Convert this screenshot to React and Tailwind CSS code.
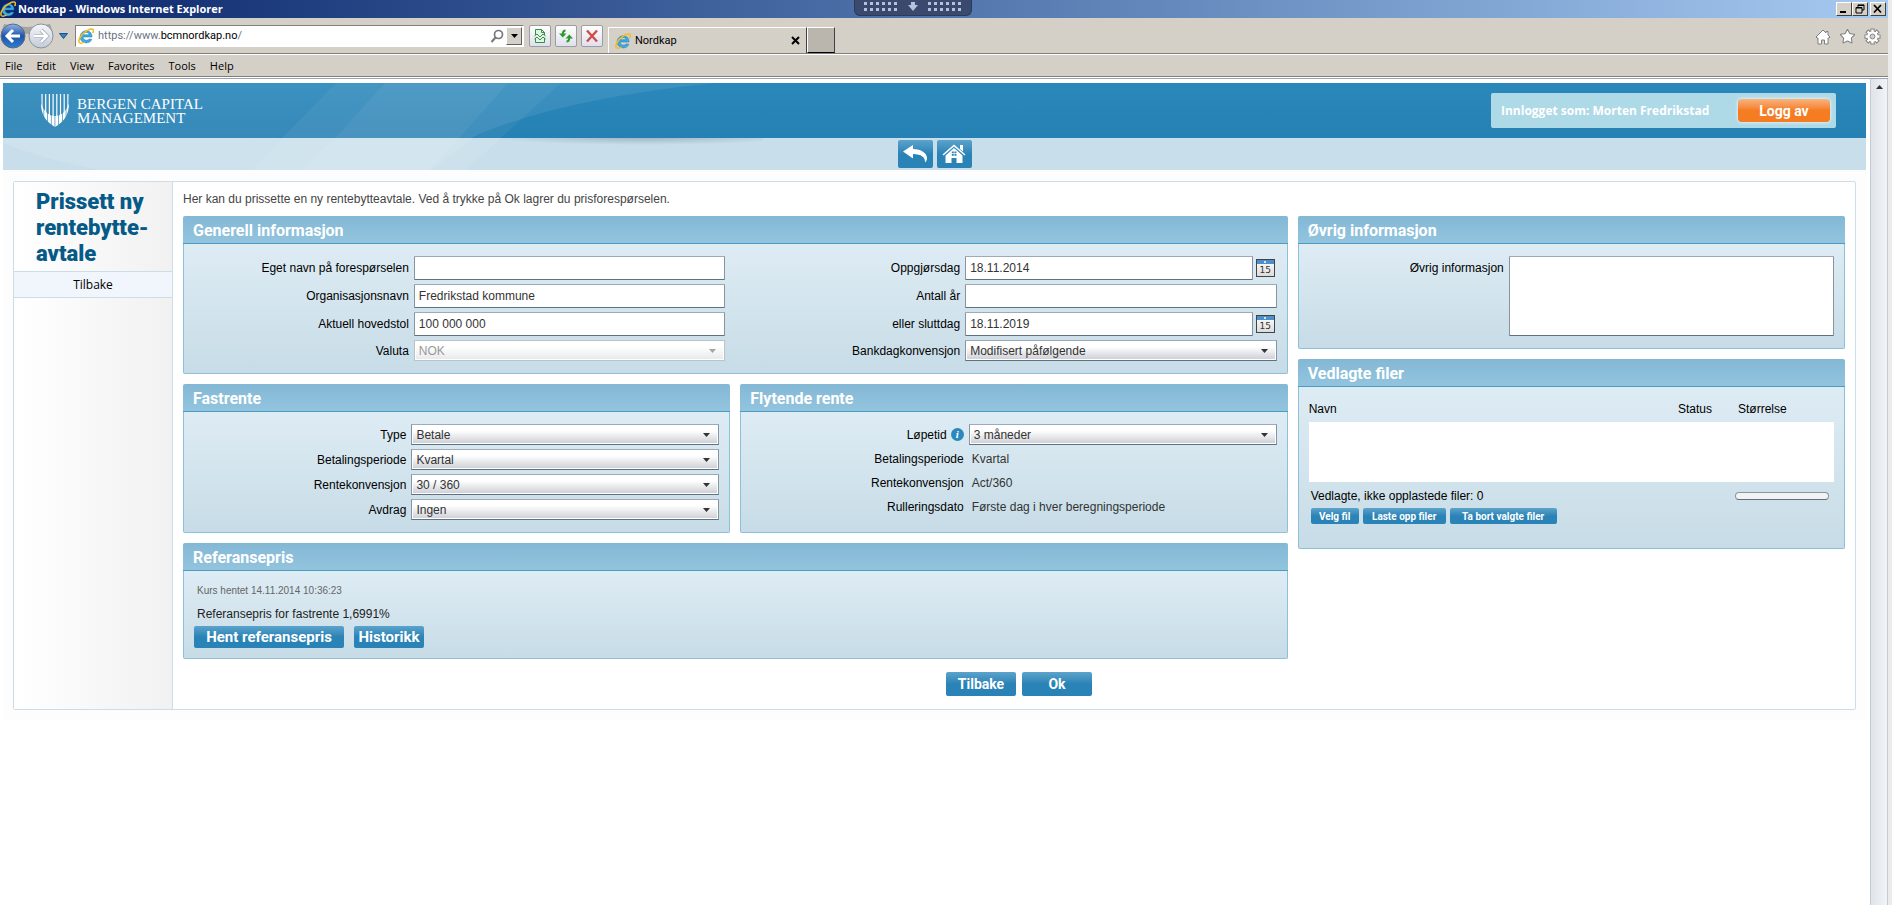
import { useState } from 'react'
import { Star } from 'lucide-react'

const panelBody = 'rounded-b-xs border border-t-0 border-[#8bc1db] bg-linear-to-b from-[#deecf4] to-[#c7dce7]'
const blueButton = 'rounded-xs bg-linear-to-b from-[#5ba3cb] via-[#2a83b6] via-50% to-[#2a83b6] font-[Roboto,sans-serif] font-bold text-white'
const fieldBorder = 'border border-[#8794a1] border-t-[#9dabb8] border-b-[#5f7080]'

function IeLogo({ className }) {
  return (
    <svg viewBox="0 0 16 16" className={className} aria-hidden="true">
      <path d="M14 9H5c.1 2 1.500 3.200 3.500 3.200 1.300 0 2.200-.5 2.700-1.200l2.600.3c-.8 2.200-2.900 3.600-5.400 3.600-3.700 0-6.300-2.600-6.300-6s2.700-6.100 6.200-6.100c3.600 0 6 2.600 5.700 6.200Zm-2.900-2.200C10.900 5.400 9.800 4.500 8.200 4.500S5.400 5.400 5.100 6.800Z" fill="#3fa9e0" stroke="#1c78b4" strokeWidth=".5" />
      <path d="M1.600 14.800C-.6 12.800 2.600 7 8.200 3.200 11.600.9 14.800.3 15.300 1.800c.3.8 0 2-.6 3.200" fill="none" stroke="#f2bb22" strokeWidth="1.600" />
      <path d="M1.600 14.800c1 .7 3 .3 5-.8" fill="none" stroke="#f2bb22" strokeWidth="1.400" />
    </svg>
  )
}

function WindowButton({ label, children }) {
  return (
    <button type="button" aria-label={label} className="flex h-3.5 w-4 items-center justify-center border border-t-white border-r-[#404040] border-b-[#404040] border-l-white bg-[#d4d0c8]">
      <svg viewBox="0 0 12 10" className="h-2.5 w-3" fill="none" stroke="#000">{children}</svg>
    </button>
  )
}

function Grip() {
  return (
    <svg viewBox="0 0 34 9" className="h-[9px] w-[34px]" fill="#b4c3dc" aria-hidden="true">
      {[0, 6, 12, 18, 24, 30].map((x) => (
        <g key={x}>
          <rect x={x} y="0" width="3" height="3" />
          <rect x={x} y="6" width="3" height="3" />
        </g>
      ))}
    </svg>
  )
}

function TitleBar() {
  return (
    <div className="relative flex h-[18px] items-center justify-between bg-linear-to-r from-[#0a246a] to-[#a6caf0] pr-0.5">
      <div className="flex items-center gap-0.5">
        <IeLogo className="h-4 w-4" />
        <h1 className="font-['Open_Sans',sans-serif] text-[11px] font-bold text-white">Nordkap - Windows Internet Explorer</h1>
      </div>
      <div className="absolute top-0 left-[854px] flex h-4 w-[118px] items-start justify-center gap-2.5 rounded-b-md border border-t-0 border-[#2c3a58] bg-[#3a4a6e] pt-0.5">
        <Grip />
        <svg viewBox="0 0 10 9" className="h-[9px] w-2.5" fill="#b4c3dc" aria-hidden="true">
          <path d="M3 0h4v3h3L5 9 0 3h3Z" />
        </svg>
        <Grip />
      </div>
      <div className="flex">
        <WindowButton label="Minimize"><path d="M2 8h6" strokeWidth="2" /></WindowButton>
        <WindowButton label="Restore"><path d="M4 3V.9h6V6H8M2 4h6M2 3.500h6V9H2ZM4 1.500h6" /></WindowButton>
        <div className="w-0.5" />
        <WindowButton label="Close"><path d="m2 1 7 7.500M9 1 2 8.500" strokeWidth="1.700" /></WindowButton>
      </div>
    </div>
  )
}

function ToolButton({ label, children }) {
  return (
    <button type="button" aria-label={label} className="flex h-[22px] w-[22px] items-center justify-center rounded-xs border border-[#9a9ca8] bg-linear-to-b from-white to-[#dfe0ec]">
      <svg viewBox="0 0 16 16" className="h-4 w-4" fill="none">{children}</svg>
    </button>
  )
}

function AddressRow() {
  return (
    <div className="flex h-9 items-center border-b border-[#808080] bg-[#d4d0c8]">
      <svg viewBox="0 0 56 30" className="h-[30px] w-14" aria-hidden="true">
        <defs>
          <linearGradient id="back" x1="0" y1="0" x2="0" y2="1">
            <stop offset="0" stopColor="#8fb4e4" />
            <stop offset=".5" stopColor="#1f55a8" />
            <stop offset="1" stopColor="#2f7fd0" />
          </linearGradient>
          <linearGradient id="fwd" x1="0" y1="0" x2="0" y2="1">
            <stop offset="0" stopColor="#f4f6fa" />
            <stop offset="1" stopColor="#c3cbd8" />
          </linearGradient>
        </defs>
        <path d="M4 3Q27 9 50 3l3 8-24 2L1 12Z" fill="#a7a49d" />
        <circle cx="13" cy="15" r="12" fill="url(#back)" stroke="#5a6b8c" />
        <circle cx="41" cy="15" r="12" fill="url(#fwd)" stroke="#8d929b" />
        <path d="M20 15H7.500M13 9l-6 6 6 6" fill="none" stroke="#fff" strokeWidth="3" />
        <path d="M34 15h12.500M41 9l6 6-6 6" fill="none" stroke="#a9b0bd" strokeWidth="4" />
        <path d="M34 15h12.500M41 9l6 6-6 6" fill="none" stroke="#fff" strokeWidth="2.400" />
      </svg>
      <svg viewBox="0 0 9 6" className="ml-[3px] h-1.5 w-[9px]" aria-hidden="true">
        <path d="M.5.5h8L4.500 5.500Z" fill="#2e86d0" stroke="#1c4f86" />
      </svg>
      <div className="ml-[7px] flex h-[22px] w-[449px] items-center border border-[#808080] border-r-white border-b-white bg-white pl-0.5">
        <IeLogo className="h-4 w-4" />
        <div className="ml-1 flex-1 pt-0.5 font-[Roboto,sans-serif] text-[11px] text-gray-500">
          https://www.<span className="text-black">bcmnordkap.no</span>/
        </div>
        <svg viewBox="0 0 14 14" className="mr-0.5 h-3.5 w-3.5" fill="none" stroke="#777" aria-hidden="true">
          <circle cx="8.500" cy="5.500" r="4" strokeWidth="1.700" />
          <path d="m5.500 8.500-4 4.500" strokeWidth="2" />
        </svg>
        <button type="button" aria-label="Show addresses" className="mr-px flex h-[18px] w-4 items-center justify-center border border-t-white border-r-[#606060] border-b-[#606060] border-l-white bg-[#d4d0c8]">
          <svg viewBox="0 0 7 4" className="h-1 w-[7px]"><path d="M0 0h7L3.500 4Z" /></svg>
        </button>
      </div>
      <div className="ml-[5px] flex gap-1">
        <ToolButton label="Compatibility view">
          <path d="M3.500 7V1.500h6l3 3V7M9.500 1.500v3h3M3.500 10v4.500h9V10" fill="#e4f4e4" stroke="#2f9440" />
          <path d="m2.500 8 2.500-2 3 3 3-3 2.500 2M2.500 11 5 9l3 3 3-3 2.500 2" stroke="#2f9440" />
        </ToolButton>
        <ToolButton label="Refresh">
          <path d="M7.500 2.500C5.500 2.500 4.800 3.500 4.800 6" stroke="#2c9a2c" strokeWidth="2" />
          <path d="M1 5.500h7.500L4.800 9.500Z" fill="#2c9a2c" />
          <path d="M8.500 13.500c2 0 2.700-1 2.700-3.500" stroke="#2c9a2c" strokeWidth="2" />
          <path d="M7.500 10.500H15l-3.700-4Z" fill="#2c9a2c" />
        </ToolButton>
        <ToolButton label="Stop">
          <path d="m3 2.500 10 11M13 2.500l-10 11" stroke="#d24b4b" strokeWidth="2.400" />
        </ToolButton>
      </div>
      <div className="ml-[5px] flex h-[26px] w-[199px] items-center self-end border border-b-0 border-white border-r-[#404040] bg-[#d4d0c8] px-1.5">
        <IeLogo className="h-4 w-4" />
        <span className="ml-1 flex-1 pt-0.5 font-[Roboto,sans-serif] text-[11px]">Nordkap</span>
        <button type="button" aria-label="Close tab">
          <svg viewBox="0 0 9 9" className="h-[9px] w-[9px]" stroke="#000" strokeWidth="2"><path d="m1 1 7 7M8 1 1 8" /></svg>
        </button>
      </div>
      <button type="button" aria-label="New tab" className="h-[26px] w-7 self-end border border-t-white border-r-[#404040] border-b-black border-l-white bg-[#bab5ad]" />
      <div className="ml-auto flex items-center gap-2 pt-0.5 pr-[7px]">
        <button type="button" aria-label="Home">
          <svg viewBox="0 0 16 16" className="h-4 w-4" fill="#fff" stroke="#808080" strokeLinejoin="round">
            <path d="M8 1 1 8l1 1h1v6h3.500v-4h3v4H13V9h1l1-1-2-2V2.500h-2V4Z" />
          </svg>
        </button>
        <button type="button" aria-label="Favorites">
          <Star className="h-[17px] w-[17px] fill-white text-[#808080]" strokeWidth={1.5} />
        </button>
        <button type="button" aria-label="Tools">
          <svg viewBox="0 0 18 18" className="h-[17px] w-[17px]">
            <g stroke="#808080" strokeWidth="4.500">
              <path d="M9 .5v17M.5 9h17M3 3l12 12M15 3 3 15" />
            </g>
            <g stroke="#fff" strokeWidth="2.500">
              <path d="M9 1.500v15M1.500 9h15M3.700 3.700l10.600 10.600M14.300 3.700 3.700 14.300" />
            </g>
            <circle cx="9" cy="9" r="5.500" fill="#fff" />
            <circle cx="9" cy="9" r="2.600" fill="#d4d0c8" stroke="#808080" />
          </svg>
        </button>
      </div>
    </div>
  )
}

function MenuBar() {
  return (
    <nav className="border-b border-[#9aa5ae] bg-white pb-px">
      <div className="flex h-[22px] items-center gap-3.5 border-b border-[#808080] bg-[#d4d0c8] px-[5px] pt-0.5 font-['Open_Sans',sans-serif] text-[11px]">
        {['File', 'Edit', 'View', 'Favorites', 'Tools', 'Help'].map((item) => (
          <button key={item} type="button">{item}</button>
        ))}
      </div>
    </nav>
  )
}

function ShieldLogo() {
  const bars = [0, 1, 2, 3, 4, 5, 6, 7]
  return (
    <svg viewBox="0 0 28 33" className="h-[33px] w-7" aria-hidden="true">
      <defs>
        <clipPath id="shield"><path d="M0 0h28c0 14-1 23-14 33C1 23 0 14 0 0Z" /></clipPath>
        <clipPath id="cup"><path d="M0 9c3 9 8 13 14 13s11-4 14-13c0 11-4 18-14 24C4 27 0 20 0 9Z" /></clipPath>
      </defs>
      <g clipPath="url(#shield)" stroke="#fff" strokeWidth="1.200">
        {bars.map((i) => <path key={i} d={`M${1 + i * 3.7} 0v26`} />)}
      </g>
      <g clipPath="url(#cup)" stroke="#fff" strokeWidth="3">
        {bars.map((i) => <path key={i} d={`M${1 + i * 3.7} 6v27`} />)}
      </g>
    </svg>
  )
}

function SiteHeader() {
  return (
    <header className="relative">
      <div className="h-[55px] bg-linear-to-b from-[#2b88bb] to-[#2580b3]" />
      <div className="h-8 bg-[#c8dfeb]" />
      {/* decorative sweeps behind the logo */}
      <svg viewBox="0 0 760 87" className="absolute top-0 left-0 h-[87px] w-[760px]" aria-hidden="true">
        <defs>
          <radialGradient id="sweepShadow">
            <stop offset="0" stopColor="#8fa7b5" stopOpacity=".8" />
            <stop offset="1" stopColor="#8fa7b5" stopOpacity="0" />
          </radialGradient>
          <clipPath id="topBar"><path d="M0 0h760v55H0Z" /></clipPath>
          <clipPath id="subBar"><path d="M0 55h760v32H0Z" /></clipPath>
        </defs>
        <g clipPath="url(#topBar)" fill="#fff">
          <path d="M0 0h712Q550 17 468 55H0Z" fillOpacity=".08" />
          <path d="M333 0h172l-49 55H279Z" fillOpacity=".05" />
          <path d="M382 0h176l-60 55H332Z" fillOpacity=".05" />
        </g>
        <g clipPath="url(#subBar)">
          <ellipse cx="640" cy="54" rx="150" ry="8" fill="url(#sweepShadow)" />
          <path d="M0 55h470l-42 32H97Q40 76 0 60Z" fill="#fff" fillOpacity=".1" />
          <path d="M279 55h177l-30 32H250Z" fill="#fff" fillOpacity=".08" />
          <path d="M332 55h166l-35 32H298Z" fill="#fff" fillOpacity=".08" />
        </g>
      </svg>
      <div className="absolute inset-x-0 top-0 flex h-[55px] items-center justify-between pr-[30px] pl-[38px]">
        <a href="#" className="flex items-center gap-2">
          <ShieldLogo />
          <span className="font-['Liberation_Serif',serif] text-[15px] leading-3.5 text-white">
            BERGEN CAPITAL<br />MANAGEMENT
          </span>
        </a>
        <div className="flex h-[35px] w-[345px] items-center justify-between rounded-xs bg-[#aed9e6] pr-1.5 pl-2.5 font-bold whitespace-nowrap text-white">
          <span className="font-['Open_Sans',sans-serif] text-[12px]">Innlogget som: Morten Fredrikstad</span>
          <button type="button" className="h-[23px] w-[92px] rounded-sm bg-linear-to-b from-[#f9b37c] via-[#f57c20] via-50% to-[#f57c20] pt-px font-[Roboto,sans-serif] text-[14px] shadow-[0_0_3px_1px_#dceff5]">
            Logg av
          </button>
        </div>
      </div>
      <nav className="absolute inset-x-0 bottom-0 flex h-8 items-center justify-center gap-1">
        <button type="button" aria-label="Tilbake" className={`flex h-7 w-[35px] items-center justify-center ${blueButton}`}>
          <svg viewBox="0 0 26 20" className="h-5 w-[26px]">
            <path d="M1 7.500 11 1v4c8 0 14 4 14 9 0 2-.8 3.500-2 4.500.4-5-3.500-8.500-12-8.500v4.500Z" fill="#fff" />
          </svg>
        </button>
        <button type="button" aria-label="Hjem" className={`flex h-7 w-[35px] items-center justify-center ${blueButton}`}>
          <svg viewBox="0 0 24 20" className="h-5 w-6" fill="#fff">
            <path d="M1 11 12 1.500 23 11" fill="none" stroke="#fff" strokeWidth="1.600" />
            <path d="M18 1h3v6.500l-3-2.500Z" />
            <path d="m12 4 8.500 7.500V19h-6v-5h-5v5h-6v-7.500Z" />
            <path d="M9.800 7.500h2v1.800h-2Zm2.600 0h2v1.800h-2Zm-2.600 2.400h2v1.800h-2Zm2.600 0h2v1.800h-2Z" fill="#2a83b6" />
          </svg>
        </button>
      </nav>
    </header>
  )
}

function Panel({ title, className = '', bodyClass = 'pb-3', children }) {
  return (
    <section className={`flex flex-col ${className}`}>
      <h2 className="h-7 rounded-t-xs border-b border-[#4a9bc6] bg-linear-to-b from-[#83b8d5] to-[#93c4de] pl-2.5 font-[Roboto,sans-serif] text-[16px] leading-[30px] font-bold text-white">
        {title}
      </h2>
      <div className={`flex-1 px-2.5 pt-3 ${bodyClass} ${panelBody}`}>{children}</div>
    </section>
  )
}

function Row({ id, label, children, tip }) {
  return (
    <div className="grid grid-cols-[12fr_17fr] items-center">
      <label htmlFor={id} className="flex items-center justify-end gap-1 pr-[5px] text-right">
        {label}
        {tip}
      </label>
      <div className="flex items-center gap-[3px]">{children}</div>
    </div>
  )
}

function TextInput({ id, defaultValue }) {
  return (
    <input
      id={id}
      type="text"
      defaultValue={defaultValue}
      className={`h-6 w-full min-w-0 rounded-[1px] bg-white px-1 text-[#333] ${fieldBorder}`}
    />
  )
}

function Select({ id, value, disabled }) {
  return (
    <div className="relative w-full">
      <select
        id={id}
        disabled={disabled}
        className={`block h-[21px] w-full appearance-none bg-linear-to-b from-white from-30% to-[#ccced4] px-1 text-[#333] shadow-[inset_0_0_0_1px_#fff] disabled:border-[#b9c3cb] disabled:to-[#e6e8ea] disabled:text-[#999] disabled:opacity-100 ${fieldBorder}`}
      >
        <option>{value}</option>
      </select>
      <svg viewBox="0 0 7 4" className={`pointer-events-none absolute top-[9px] right-[9px] h-1 w-[7px] ${disabled ? 'fill-[#a5a5a5]' : 'fill-[#333]'}`} aria-hidden="true">
        <path d="M0 0h7L3.500 4Z" />
      </svg>
    </div>
  )
}

function CalendarButton({ label }) {
  return (
    <button type="button" aria-label={label} className="mr-0.5 flex h-[18px] w-[19px] shrink-0 flex-col border border-[#444] bg-linear-to-b from-white to-[#dcdcdc]">
      <span className="flex h-1 w-full items-center justify-center bg-[#4d8fca]">
        <span className="h-0.5 w-0.5 rounded-full bg-white" />
      </span>
      <span className="w-full text-center font-['DejaVu_Sans',sans-serif] text-[9px] leading-3 text-[#333]">15</span>
    </button>
  )
}

function InfoIcon() {
  return (
    <span className="flex h-[13px] w-[13px] items-center justify-center rounded-full bg-[#2a88bd] font-['Liberation_Serif',serif] text-[11px] leading-none font-bold text-white italic">
      i
    </span>
  )
}

function GeneralPanel() {
  return (
    <Panel title="Generell informasjon" className="col-span-2">
      <div className="grid grid-cols-2 gap-5">
        <div className="flex flex-col gap-1">
          <Row id="navn" label="Eget navn på forespørselen"><TextInput id="navn" /></Row>
          <Row id="org" label="Organisasjonsnavn"><TextInput id="org" defaultValue="Fredrikstad kommune" /></Row>
          <Row id="hovedstol" label="Aktuell hovedstol"><TextInput id="hovedstol" defaultValue="100 000 000" /></Row>
          <Row id="valuta" label="Valuta"><Select id="valuta" value="NOK" disabled /></Row>
        </div>
        <div className="flex flex-col gap-1">
          <Row id="oppgjor" label="Oppgjørsdag">
            <TextInput id="oppgjor" defaultValue="18.11.2014" />
            <CalendarButton label="Velg oppgjørsdag" />
          </Row>
          <Row id="aar" label="Antall år"><TextInput id="aar" /></Row>
          <Row id="slutt" label="eller sluttdag">
            <TextInput id="slutt" defaultValue="18.11.2019" />
            <CalendarButton label="Velg sluttdag" />
          </Row>
          <Row id="bankdag" label="Bankdagkonvensjon"><Select id="bankdag" value="Modifisert påfølgende" /></Row>
        </div>
      </div>
    </Panel>
  )
}

function FixedRatePanel() {
  const fields = [
    ['type', 'Type', 'Betale'],
    ['periode', 'Betalingsperiode', 'Kvartal'],
    ['konvensjon', 'Rentekonvensjon', '30 / 360'],
    ['avdrag', 'Avdrag', 'Ingen'],
  ]
  return (
    <Panel title="Fastrente">
      <div className="flex flex-col gap-1">
        {fields.map(([id, label, value]) => (
          <Row key={id} id={id} label={label}><Select id={id} value={value} /></Row>
        ))}
      </div>
    </Panel>
  )
}

function FloatingRatePanel() {
  const values = [
    ['Betalingsperiode', 'Kvartal'],
    ['Rentekonvensjon', 'Act/360'],
    ['Rulleringsdato', 'Første dag i hver beregningsperiode'],
  ]
  return (
    <Panel title="Flytende rente">
      <div className="flex flex-col gap-1">
        <Row id="lopetid" label="Løpetid" tip={<InfoIcon />}><Select id="lopetid" value="3 måneder" /></Row>
        {values.map(([label, value]) => (
          <div key={label} className="grid h-5 grid-cols-[12fr_17fr] items-center">
            <span className="pr-[5px] text-right">{label}</span>
            <span className="pl-[3px] text-[#333]">{value}</span>
          </div>
        ))}
      </div>
    </Panel>
  )
}

function ReferencePanel() {
  return (
    <Panel title="Referansepris" className="col-span-2" bodyClass="pb-2.5">
      <p className="pl-[3px] text-[10px] leading-4 text-[#666]">Kurs hentet 14.11.2014 10:36:23</p>
      <p className="mt-[7px] pl-[3px] leading-4 text-[#222]">Referansepris for fastrente 1,6991%</p>
      <div className="mt-1 flex gap-2.5">
        <button type="button" className={`h-[22px] w-[150px] text-[15px] ${blueButton}`}>Hent referansepris</button>
        <button type="button" className={`h-[22px] w-[70px] text-[15px] ${blueButton}`}>Historikk</button>
      </div>
    </Panel>
  )
}

function FilesPanel() {
  return (
    <Panel title="Vedlagte filer" className="min-h-[190px]">
      <table className="w-full table-fixed text-left">
        <thead>
          <tr className="h-[23px]">
            <th className="pb-1 font-normal">Navn</th>
            <th className="w-[60px] pb-1 font-normal">Status</th>
            <th className="w-24 pb-1 font-normal">Størrelse</th>
          </tr>
        </thead>
        <tbody>
          <tr className="h-[60px] bg-white"><td colSpan={3} /></tr>
        </tbody>
      </table>
      <div className="mt-1.5 flex items-center justify-between pr-[5px] pl-0.5 leading-4">
        <span>Vedlagte, ikke opplastede filer: 0</span>
        <div role="progressbar" aria-label="Opplasting" className="h-2 w-[94px] rounded-sm border border-[#8c96a0] border-b-[#5f6f7d] bg-[#f3f3f3]" />
      </div>
      <div className="mt-1 flex gap-1 pl-0.5 text-[10px]">
        <button type="button" className={`h-4 w-12 ${blueButton}`}>Velg fil</button>
        <button type="button" className={`h-4 w-[83px] ${blueButton}`}>Laste opp filer</button>
        <button type="button" className={`h-4 w-[107px] ${blueButton}`}>Ta bort valgte filer</button>
      </div>
    </Panel>
  )
}

function Sidebar() {
  return (
    <aside className="w-[159px] shrink-0 border-r border-[#cbdde6] bg-linear-to-r from-white to-[#f1f1f1]">
      <h2 className="border-b border-[#cbdde6] pt-[7px] pb-1 pl-[22px] font-[Roboto,sans-serif] text-[22px] leading-[26px] font-black text-[#065a87]">
        Prissett ny rentebytte-<br />avtale
      </h2>
      <a href="#" className="block h-[26px] border-b border-[#cbdde6] bg-[#f0f6fb] text-center font-['Open_Sans',sans-serif] leading-[26px] text-black">
        Tilbake
      </a>
    </aside>
  )
}

export default function App() {
  const [note, setNote] = useState('')

  return (
    <div className="flex min-h-screen flex-col bg-[#ebebeb] pr-1 font-['Liberation_Sans',Arial,sans-serif] text-[12px] text-black">
      <TitleBar />
      <AddressRow />
      <div className="h-px bg-white" />
      <MenuBar />
      <div className="flex flex-1 bg-white">
        <div className="flex-1 pt-1 pr-1 pl-[3px]">
          <SiteHeader />
          <div className="bg-[#fdfdfd] px-2.5 pt-[11px] pb-2.5">
            <main className="flex rounded-xs border border-[#cbdde6] bg-white">
              <Sidebar />
              <div className="flex-1 px-2.5 pt-2 pb-[13px]">
                <p className="mb-2 leading-[18px] text-[#444]">
                  Her kan du prissette en ny rentebytteavtale. Ved å trykke på Ok lagrer du prisforespørselen.
                </p>
                <div className="grid grid-cols-3 gap-2.5">
                  <div className="col-span-2 grid grid-cols-2 gap-2.5">
                    <GeneralPanel />
                    <FixedRatePanel />
                    <FloatingRatePanel />
                    <ReferencePanel />
                  </div>
                  <div className="flex flex-col gap-2.5">
                    <Panel title="Øvrig informasjon">
                      <div className="grid grid-cols-[8fr_13fr]">
                        <label htmlFor="ovrig" className="pr-[5px] text-right leading-6">Øvrig informasjon</label>
                        <textarea
                          id="ovrig"
                          value={note}
                          onChange={(e) => setNote(e.target.value)}
                          className={`block h-20 w-full resize-none rounded-[1px] bg-white p-1 ${fieldBorder}`}
                        />
                      </div>
                    </Panel>
                    <FilesPanel />
                  </div>
                </div>
                <div className="mt-[13px] flex justify-center gap-1.5 pl-2.5">
                  <button type="button" className={`h-6 w-[70px] text-[14px] ${blueButton}`}>Tilbake</button>
                  <button type="button" className={`h-6 w-[70px] text-[14px] ${blueButton}`}>Ok</button>
                </div>
              </div>
            </main>
          </div>
        </div>
        <div className="flex w-[18px] justify-center border-x border-[#c3ccd4] bg-linear-to-r from-[#dfe4e9] to-[#f1f4f8] pt-1.5">
          <svg viewBox="0 0 7 4" className="h-1 w-[7px]" aria-hidden="true"><path d="M3.500 0 7 4H0Z" fill="#333" /></svg>
        </div>
      </div>
    </div>
  )
}
